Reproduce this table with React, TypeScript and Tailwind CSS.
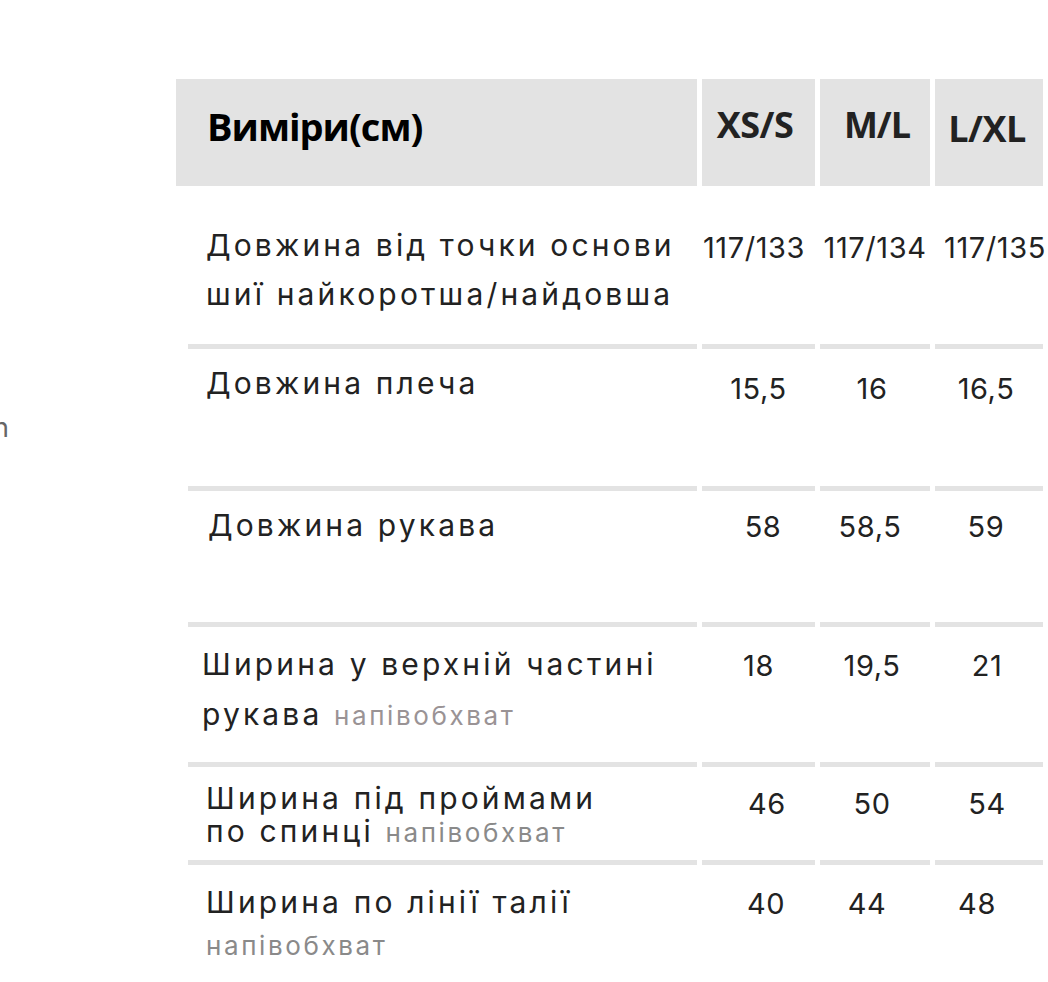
import React from "react";

const F = "[font-family:Inter,'Noto_Sans',sans-serif]";
const H = "[font-family:'Open_Sans','Noto_Sans',sans-serif]";
const LBL = `${F} text-[30px] tracking-[0.105em] text-[#222] whitespace-nowrap`;
const NUM = `${F} text-[29px] leading-[49px] tracking-[0.02em] text-[#222] whitespace-nowrap`;
const GRAY = "text-[26px] tracking-[0.1em]";
const GRID = "grid grid-cols-[521px_113px_110px_108px] gap-x-[5px]";

function Sep({ first }: { first?: boolean }) {
  return first ? (
    <div className="h-[5px] ml-[12px] bg-[#e3e3e3]" />
  ) : (
    <div className="h-[5px] bg-[#e3e3e3]" />
  );
}

function Num({ v, cls }: { v: string; cls: string }) {
  return (
    <div className="flex flex-col">
      <div className={`flex-1 flex justify-center ${cls}`}>
        <span className={NUM}>{v}</span>
      </div>
      <Sep />
    </div>
  );
}

function NumLast({ v, cls }: { v: string; cls: string }) {
  return (
    <div className={`flex justify-center ${cls}`}>
      <span className={NUM}>{v}</span>
    </div>
  );
}

export default function App() {
  return (
    <div className="w-[1048px] h-[982px] overflow-hidden bg-white flex">
      <div className="w-[176px] shrink-0 overflow-hidden pt-[414px]">
        <div className={`${F} text-[27px] leading-[27px] text-[#666] -ml-[7px]`}>n</div>
      </div>
      <div className="pt-[79px] flex flex-col">
        {/* header */}
        <div className={`${GRID} h-[107px]`}>
          <div className="bg-[#e3e3e3] pl-[31px] pt-[28px]">
            <span className={`${H} font-bold text-[38px] leading-none tracking-[-1px] text-black`}>
              Виміри(см)
            </span>
          </div>
          <div className="bg-[#e3e3e3] flex justify-center pt-[28px] pr-[7px]">
            <span className={`${H} font-bold text-[36px] leading-none tracking-[-0.5px] text-[#222]`}>XS/S</span>
          </div>
          <div className="bg-[#e3e3e3] flex justify-center pt-[28px] pl-[4px]">
            <span className={`${H} font-bold text-[36px] leading-none tracking-[-1px] text-[#222]`}>M/L</span>
          </div>
          <div className="bg-[#e3e3e3] flex justify-center pt-[32px] pr-[4px]">
            <span className={`${H} font-bold text-[36px] leading-none tracking-[-0.5px] text-[#222]`}>L/XL</span>
          </div>
        </div>

        {/* row 1 */}
        <div className={`${GRID} h-[163px]`}>
          <div className="flex flex-col">
            <div className="flex-1 pl-[30px] pt-[35px]">
              <div className={`${LBL} leading-[49px]`}>
                Довжина від точки основи
                <br />
                шиї найкоротша/найдовша
              </div>
            </div>
            <Sep first />
          </div>
          <Num v="117/133" cls="pt-[37px] pr-[9px]" />
          <Num v="117/134" cls="pt-[37px]" />
          <Num v="117/135" cls="pt-[37px] pl-[12px]" />
        </div>

        {/* row 2 */}
        <div className={`${GRID} h-[142px]`}>
          <div className="flex flex-col">
            <div className="flex-1 pl-[30px] pt-[10px]">
              <div className={`${LBL} leading-[49px]`}>Довжина плеча</div>
            </div>
            <Sep first />
          </div>
          <Num v="15,5" cls="pt-[15px]" />
          <Num v="16" cls="pt-[15px] pr-[6px]" />
          <Num v="16,5" cls="pt-[15px] pr-[6px]" />
        </div>

        {/* row 3 */}
        <div className={`${GRID} h-[136px]`}>
          <div className="flex flex-col">
            <div className="flex-1 pl-[32px] pt-[10px]">
              <div className={`${LBL} leading-[49px]`}>Довжина рукава</div>
            </div>
            <Sep first />
          </div>
          <Num v="58" cls="pt-[11px] pl-[9px]" />
          <Num v="58,5" cls="pt-[11px] pr-[10px]" />
          <Num v="59" cls="pt-[11px] pr-[6px]" />
        </div>

        {/* row 4 */}
        <div className={`${GRID} h-[140px]`}>
          <div className="flex flex-col">
            <div className="flex-1 pl-[26px] pt-[12px]">
              <div className={`${LBL} leading-[50px]`}>
                Ширина у верхній частині
                <br />
                рукава{" "}
                <span className={`${GRAY} text-[#9a9395]`}>напівобхват</span>
              </div>
            </div>
            <Sep first />
          </div>
          <Num v="18" cls="pt-[14px]" />
          <Num v="19,5" cls="pt-[14px] pr-[6px]" />
          <Num v="21" cls="pt-[14px] pr-[4px]" />
        </div>

        {/* row 5 */}
        <div className={`${GRID} h-[98px]`}>
          <div className="flex flex-col">
            <div className="flex-1 pl-[30px] pt-[15px]">
              <div className={`${LBL} leading-[33px]`}>
                Ширина під проймами
                <br />
                по спинці{" "}
                <span className={`${GRAY} text-[#8a8a8a]`}>напівобхват</span>
              </div>
            </div>
            <Sep first />
          </div>
          <Num v="46" cls="pt-[12px] pl-[17px]" />
          <Num v="50" cls="pt-[12px] pr-[6px]" />
          <Num v="54" cls="pt-[12px] pr-[4px]" />
        </div>

        {/* row 6 */}
        <div className={`${GRID}`}>
          <div className="pl-[30px] pt-[21px]">
            <div className={`${LBL} leading-[33px]`}>Ширина по лінії талії</div>
            <div className={`${F} ${GRAY} leading-[30px] text-[#8a8a8a] mt-[12px]`}>
              напівобхват
            </div>
          </div>
          <NumLast v="40" cls="pt-[14px] pl-[15px]" />
          <NumLast v="44" cls="pt-[14px] pr-[16px]" />
          <NumLast v="48" cls="pt-[14px] pr-[24px]" />
        </div>
      </div>
    </div>
  );
}
